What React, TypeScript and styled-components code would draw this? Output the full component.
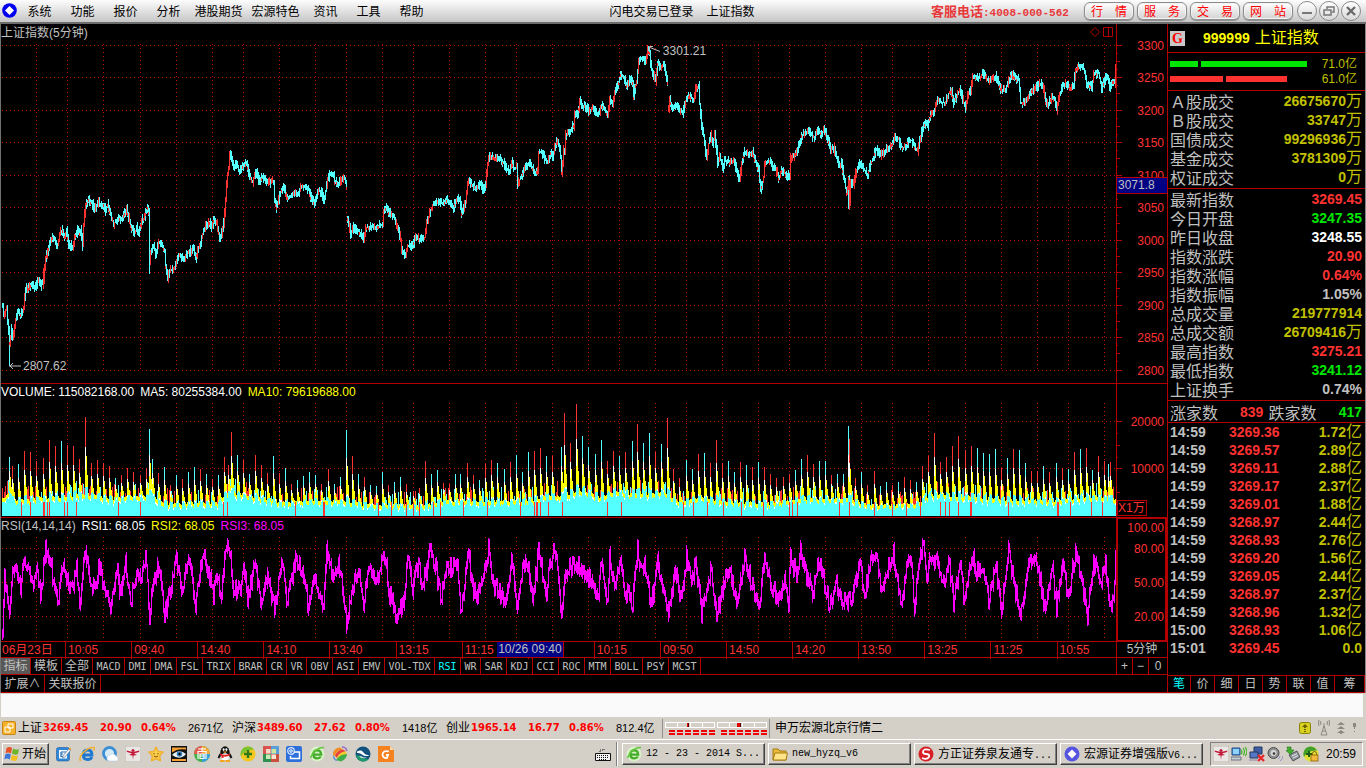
import React from "react";
import styled, { createGlobalStyle, css } from "styled-components";

const RED = "#b40000";
const CYAN = "#54ffff";
const HOT = "#ff3232";
const SILVER = "#c0c0c0";
const SANS = '"Liberation Sans", "Noto Sans CJK SC", sans-serif';
const CJK = '"Noto Sans CJK SC", "Liberation Sans", sans-serif';

const Global = createGlobalStyle`
  *, *::before, *::after { box-sizing: border-box; }
  body { margin: 0; background: #d4d0c8; font-family: ${SANS}; font-size: 12px; line-height: 16px; }
  button { font: inherit; color: inherit; margin: 0; padding: 0; border: 0; background: none; }
  svg { display: block; flex: none; }
`;

/* ---------- data ---------- */

const menus = ["系统", "功能", "报价", "分析", "港股期货", "宏源特色", "资讯", "工具", "帮助"];
const shortcuts = ["行情", "服务", "交易", "网站"];

const gridX = [36, 67, 103, 140, 176, 212, 243, 279, 315, 346, 382, 413, 449, 485, 516, 552, 588, 619, 655, 686, 722, 758, 789, 825, 861, 892, 928, 965, 1001, 1037, 1068, 1104];
const priceY = [45, 77, 110, 142, 175, 207, 240, 272, 305, 337, 370];

const price = `2,306 3,313 6,308 7,319 9,342 11,328 12,338 15,319 17,311 20,314 23,309 24,296 26,286 27,289 31,284 33,287 35,286 38,278 40,285 43,281 44,268 45,259 47,251 48,248 51,237 53,237 57,245 59,233 62,230 64,236 66,229 68,245 70,245 72,245 75,235 77,229 79,233 80,230 82,245 83,223 85,204 88,199 92,204 94,208 98,202 101,207 103,204 105,210 107,204 110,215 113,223 117,218 121,218 123,215 126,208 128,218 131,228 134,233 136,227 138,233 141,220 143,218 146,210 147,207 148,212 149,262 150,252 153,245 155,254 158,242 161,245 164,250 165,266 167,278 170,269 173,269 176,262 178,255 181,257 184,258 187,253 190,250 193,248 195,258 197,250 200,242 203,230 206,223 209,222 211,227 213,220 216,223 219,237 222,230 223,223 225,200 226,183 228,167 229,154 231,157 233,168 236,163 239,173 241,167 246,163 249,175 252,182 255,170 258,180 262,177 264,178 267,183 269,182 273,180 274,200 276,207 279,193 283,187 286,197 289,197 293,193 298,193 301,185 305,187 308,190 310,197 314,203 317,190 321,192 323,200 325,190 327,178 330,173 333,175 334,182 338,182 343,177 345,180 346,187 347,218 350,233 353,227 357,230 360,233 363,238 365,227 372,227 377,226 382,224 383,210 385,208 388,212 393,215 397,227 400,238 401,250 405,256 407,245 412,245 415,237 419,238 424,237 426,223 430,210 433,202 437,200 442,203 446,200 450,203 453,207 455,200 458,197 459,197 461,213 463,208 465,202 466,190 468,180 472,185 476,187 480,183 483,190 485,183 487,163 489,155 493,158 498,157 503,163 506,168 509,170 511,160 513,168 516,167 517,183 521,175 524,168 528,163 532,168 535,173 537,168 538,152 541,152 544,158 547,162 550,152 552,155 554,148 556,142 559,147 560,158 561,172 563,150 564,153 565,135 568,132 573,125 574,113 577,115 579,100 582,107 584,105 588,110 593,108 597,115 601,105 605,110 607,115 609,98 612,103 614,92 618,82 620,74 623,77 626,85 629,78 632,82 633,97 634,88 636,82 638,60 640,58 643,57 645,62 647,50 649,52 650,63 652,73 655,80 657,63 660,68 663,63 665,75 667,82 668,108 669,100 672,107 675,104 679,108 682,113 684,103 687,95 690,97 693,100 695,87 698,85 699,103 701,125 703,135 705,152 706,158 708,143 710,135 712,143 714,135 716,150 717,163 719,155 722,168 724,160 729,162 733,160 736,170 739,180 741,163 744,152 749,153 752,152 755,162 758,170 760,190 763,177 764,162 769,160 773,167 776,172 778,178 781,170 786,175 789,175 790,157 794,155 798,145 801,135 804,133 808,130 811,135 814,138 816,130 821,133 824,130 827,138 830,148 833,147 836,157 839,167 841,163 843,177 846,193 848,180 849,204 850,180 853,185 855,172 859,163 863,168 867,175 870,163 873,158 875,148 879,155 883,152 888,147 892,143 894,137 898,137 900,147 905,147 908,140 911,140 914,147 917,150 920,137 923,123 927,125 930,115 934,108 937,98 941,102 945,102 948,93 951,90 953,102 957,93 960,90 963,103 965,107 967,95 970,90 972,77 977,77 980,76 983,72 987,80 992,78 995,75 998,83 1001,90 1005,88 1008,80 1011,73 1015,78 1018,80 1020,102 1023,102 1027,97 1031,90 1035,87 1040,83 1043,88 1045,102 1048,103 1051,97 1054,100 1056,110 1058,97 1062,85 1065,83 1069,88 1073,85 1075,68 1081,65 1084,70 1086,87 1088,83 1091,88 1093,73 1098,73 1101,88 1104,80 1107,75 1109,90 1111,80 1114,82 1115,66`;
const sessionBreaks = new Set([347, 668]);

const rsi = `2,636 3,610 4,580 9,619 12,575 16,558 20,590 24,552 28,575 32,585 36,560 40,598 45,543 50,555 53,585 57,605 62,560 67,580 72,595 76,560 79,610 85,545 90,580 96,598 98,562 105,595 110,614 116,565 120,595 125,556 130,608 135,575 140,575 145,551 149,626 153,575 158,565 164,621 170,588 176,557 182,590 186,560 191,570 195,608 200,560 204,548 208,570 213,595 216,575 221,594 225,540 228,538 233,590 240,592 243,560 247,600 255,560 260,602 267,573 274,617 281,555 286,608 291,582 295,556 302,565 308,612 313,570 323,616 326,545 333,575 338,560 343,595 346,629 352,595 357,570 363,605 368,560 374,585 384,548 389,598 396,620 403,605 407,554 412,590 418,563 422,590 430,543 436,570 440,600 446,570 454,560 457,563 460,624 468,546 472,590 476,600 482,580 488,542 492,582 500,600 507,600 511,553 517,617 522,562 527,558 532,607 538,546 546,600 549,560 556,546 561,619 564,570 573,560 578,562 584,575 590,578 597,605 601,557 607,611 609,552 614,590 619,554 624,590 632,611 637,542 641,572 644,558 649,600 653,598 657,558 663,600 668,615 675,572 681,600 686,550 691,590 695,556 701,618 707,595 710,560 716,620 722,590 728,567 737,605 744,555 750,580 759,617 764,551 771,590 780,600 784,577 788,606 790,550 796,575 800,546 806,575 812,600 817,560 822,570 829,614 836,580 841,605 850,602 855,575 860,565 864,600 870,560 875,547 880,590 887,565 893,547 900,611 907,560 911,560 914,611 919,560 923,537 926,580 930,552 937,560 944,588 948,553 953,608 960,560 963,605 971,549 977,570 983,565 988,605 995,560 1001,614 1008,548 1013,580 1020,622 1028,558 1037,560 1044,613 1052,570 1056,615 1062,553 1068,600 1075,545 1081,580 1087,622 1093,555 1100,585 1105,558 1109,614 1114,590 1115,550`;

const spikes = `9,457c 12,466r 18,464c 24,451r 30,452r 36,461r 43,458r 49,440r 55,446r 61,441c 67,445r 73,446r 79,459r 85,417r 91,463r 97,460r 103,463r 109,466r 115,478c 121,475r 127,468r 133,472r 140,475r 146,468r 149,429c 152,459c 158,473r 164,467c 170,485r 176,475c 182,479r 188,472c 194,467c 200,469r 206,474c 212,479r 218,475c 224,457r 228,465r 231,432r 237,455c 243,460r 249,474c 255,455r 261,465r 267,473r 273,456c 279,473r 285,468c 291,484r 297,480c 303,476c 309,472c 315,475c 321,484r 328,469r 334,484c 340,477c 346,430c 352,456r 358,474c 364,477r 370,485c 376,486c 382,472c 388,485r 394,482c 400,477c 406,484r 413,491r 419,488r 425,461r 431,474c 437,470c 443,483r 449,484r 455,474c 460,474c 467,463r 473,475r 479,480c 485,464r 491,460r 497,463c 504,469c 510,462r 516,455c 522,472c 528,452c 534,451r 540,448r 546,456c 552,456r 561,447c 564,413r 570,443r 576,404r 582,436c 588,447c 595,454c 601,440c 607,461r 613,451r 619,456c 625,452r 632,441c 637,424r 643,443c 649,433c 655,452r 661,444c 667,418r 673,469r 679,478r 686,460c 692,469c 698,454r 704,453c 710,463r 716,440r 722,463r 728,461c 734,472c 740,462r 746,465c 752,467r 758,462c 764,467r 770,474r 776,478r 783,477r 789,474r 795,470c 801,459c 807,455r 813,464r 819,461c 825,461c 831,475r 837,474c 843,474c 848,426c 849,439r 855,478r 861,472c 867,485r 874,471r 880,486c 886,482c 892,485r 898,482c 904,477r 910,480r 916,482c 922,466r 928,456r 934,433r 940,462r 946,457r 952,446r 958,436r 965,450r 971,446r 977,448c 983,453c 989,454c 995,449c 1001,468r 1007,458c 1013,449r 1019,450c 1025,463c 1031,471r 1037,471r 1043,466c 1049,472r 1056,463c 1062,468r 1068,469c 1074,452r 1080,449c 1086,448r 1092,470c 1098,456r 1104,461r 1108,464c 1110,462r`;

const risers = [21, 30, 43, 44, 47, 49, 64, 67, 76, 118, 140, 223, 227, 295, 323, 324, 378, 391, 406, 413, 419, 433, 440, 463, 487, 520, 534, 536, 537, 540, 548, 562, 607, 621, 683, 693, 707, 723, 741, 763, 789, 792, 797, 839, 849, 874, 892, 906, 920, 940, 945, 949, 958, 970, 971, 1008, 1057, 1058, 1070, 1091, 1102];
const volumeBase = "2,500 9,493 14,500 40,498 50,497 85,494 110,498 150,495 165,503 218,502 226,493 250,495 280,502 345,500 360,504 425,505 440,500 520,501 545,497 560,495 585,491 600,497 615,491 630,493 650,494 665,492 680,503 700,497 720,501 770,503 800,498 850,499 870,505 915,504 930,494 990,498 1020,500 1060,500 1080,497 1115,498";

const toPoints = (s: string) => s.split(" ").map((p) => p.split(",").map(Number) as [number, number]);

function series(text: string): Map<number, number> {
  const points = toPoints(text);
  const out = new Map<number, number>();
  for (let i = 0; i < points.length - 1; i++) {
    const [x0, y0] = points[i];
    const [x1, y1] = points[i + 1];
    for (let x = x0; x <= x1; x++) out.set(x, y0 + ((y1 - y0) * (x - x0)) / (x1 - x0));
  }
  return out;
}

function generator(seed: number) {
  let s = seed;
  return () => {
    s = (s * 1103515245 + 12345) % 2147483648;
    return s / 2147483648;
  };
}

const bar = (x: number, a: number, b: number) => `M${x + 0.5} ${Math.round(a)}V${Math.round(b)}`;

function buildPrice() {
  const rnd = generator(7);
  let red = "";
  let cyan = "";
  let prev = 306;
  series(price).forEach((y, x) => {
    const from = sessionBreaks.has(x) ? y : prev;
    const top = Math.min(from, y) - rnd() * 5;
    const bottom = Math.max(from, y) + 1 + rnd() * 5;
    const d = y - from;
    const chance = d < -5 ? 0.8 : d < 0 ? 0.28 : 0.08;
    if (rnd() < chance) {
      red += bar(x, top, bottom);
    } else {
      cyan += bar(x, top, bottom);
      if (rnd() < 0.18) red += bar(x, y, y + 3);
    }
    prev = y;
  });
  cyan += bar(9, 330, 366) + bar(149, 210, 274) + bar(848, 176, 209);
  red += bar(849, 180, 210) + bar(43, 268, 289);
  return { red, cyan };
}

function buildRsi() {
  const rnd = generator(21);
  let d = "";
  let prev = 636;
  series(rsi).forEach((y, x) => {
    const pull = (582 - y) * 0.15;
    const now = y + pull + (rnd() - 0.5) * 16;
    d += bar(x, Math.min(prev, now) - 1 - rnd() * 5, Math.max(prev, now) + 1 + rnd() * 5);
    prev = now;
  });
  return d;
}

function buildVolume() {
  const rnd = generator(5);
  const base = series(volumeBase);
  const tall = new Map<number, { top: number; up: boolean }>();
  spikes.split(" ").forEach((s) => {
    const [x, rest] = s.split(",");
    tall.set(Number(x), { top: parseInt(rest, 10), up: rest.endsWith("r") });
  });
  const out = { fill: "", red: "", cyan: "", white: "", yellow: "", riser: "" };
  let last = 0;
  let lastTop = 490;
  base.forEach((b0, x) => {
    const level = b0 + rnd() * 3;
    const spike = tall.get(x);
    if (spike) {
      last = x;
      lastTop = spike.top;
      if (spike.up) out.red += bar(x, spike.top, 516);
      else out.cyan += bar(x, spike.top, 516);
    } else if (rnd() < 0.4) {
      const t = level - 5 - rnd() * 10;
      if (rnd() < 0.5) out.red += bar(x, t, level);
      else out.cyan += bar(x, t, level);
    }
    const d = x - last;
    const rise = level - lastTop;
    const yellow = [0.3, 0.48, 0.24, 0.04][d] ?? 0;
    const white = [0.6, 0.4, 0, 0][d] ?? 0;
    const yTop = level - rise * yellow;
    const low = d < 3 ? level - rise * 0.1 : level + 2;
    const cut = Math.max(yTop + 3, low);
    out.fill += bar(x, cut - 1, 516);
    if (white > 0) out.white += bar(x, level - rise * white - 1, cut);
    out.yellow += bar(x, yTop - 1, cut);
    if (rnd() < 0.3) out.white += bar(x, cut - 1, cut + 2);
  });
  risers.forEach((x) => {
    out.riser += bar(x, 502, 516);
  });
  return out;
}

const pricePaths = buildPrice();
const rsiPath = buildRsi();
const volumePaths = buildVolume();

const indicators = ["MACD", "DMI", "DMA", "FSL", "TRIX", "BRAR", "CR", "VR", "OBV", "ASI", "EMV", "VOL-TDX", "RSI", "WR", "SAR", "KDJ", "CCI", "ROC", "MTM", "BOLL", "PSY", "MCST"];
const times = ["06月23日", "10:05", "09:40", "14:40", "14:10", "13:40", "13:15", "11:15", "", "10:15", "09:50", "14:50", "14:20", "13:50", "13:25", "11:25", "10:55"];

const YEL = "#c0c000";
const LIME = "#00e600";
type Quote = [string, string, string, string?];
const turnover: Quote[] = [
  ["Ａ股成交", "26675670", YEL, "万"],
  ["Ｂ股成交", "33747", YEL, "万"],
  ["国债成交", "99296936", YEL, "万"],
  ["基金成交", "3781309", YEL, "万"],
  ["权证成交", "0", YEL, "万"],
];
const summary: Quote[] = [
  ["最新指数", "3269.45", HOT],
  ["今日开盘", "3247.35", LIME],
  ["昨日收盘", "3248.55", "#ffffff"],
  ["指数涨跌", "20.90", HOT],
  ["指数涨幅", "0.64%", HOT],
  ["指数振幅", "1.05%", SILVER],
  ["总成交量", "219777914", YEL],
  ["总成交额", "26709416", YEL, "万"],
  ["最高指数", "3275.21", HOT],
  ["最低指数", "3241.12", LIME],
  ["上证换手", "0.74%", SILVER],
];
const ticks = [
  ["14:59", "3269.36", "1.72"], ["14:59", "3269.57", "2.89"], ["14:59", "3269.11", "2.88"], ["14:59", "3269.17", "2.37"],
  ["14:59", "3269.01", "1.88"], ["14:59", "3268.97", "2.44"], ["14:59", "3268.93", "2.76"], ["14:59", "3269.20", "1.56"],
  ["14:59", "3269.05", "2.44"], ["14:59", "3268.97", "2.37"], ["14:59", "3268.96", "1.32"], ["15:00", "3268.93", "1.06"],
  ["15:01", "3269.45", "0.0"],
];
const indices = [
  ["上证", "3269.45", "20.90", "0.64%", "2671"],
  ["沪深", "3489.60", "27.62", "0.80%", "1418"],
  ["创业", "1965.14", "16.77", "0.86%", "812.4"],
];

/* ---------- title bar ---------- */

const TitleBar = styled.header`
  display: flex;
  align-items: center;
  height: 24px;
  padding-left: 2px;
  padding-right: 5px;
  background: linear-gradient(#fdfdfd, #c6c6c6);
  border-bottom: 2px solid #6c6c6c;
  color: #000;
  font-family: ${CJK};
`;
const Menu = styled.nav`
  display: flex;
  margin-left: 1px;
`;
const MenuItem = styled.button<{ $wide: boolean }>`
  width: ${(p) => (p.$wide ? 57 : 43)}px;
  height: 22px;
  text-align: center;
  white-space: nowrap;
`;
const Caption = styled.div`
  flex: 1;
  display: flex;
  justify-content: center;
  gap: 13px;
  white-space: nowrap;
`;
const Hotline = styled.div`
  width: 153px;
  color: #e8383a;
  font-size: 13px;
  font-weight: bold;
  white-space: nowrap;
`;
const HotlineNumber = styled.span`
  font: bold 11px "Liberation Mono", monospace;
`;
const ShortcutBar = styled.div`
  display: flex;
  gap: 3px;
`;
const Shortcut = styled.button`
  display: flex;
  justify-content: space-between;
  align-items: center;
  width: 50px;
  height: 18px;
  padding: 0 6px;
  border: 1px solid #8c8c8c;
  border-radius: 6px;
  background: linear-gradient(#ffffff, #d2d2d2);
  box-shadow: inset 0 0 0 1px #f4f4f4, 0 1px 1px #8a8a8a;
  color: #ff0000;
`;
const WindowButtons = styled.div`
  display: flex;
  gap: 2px;
  margin-left: 4px;
`;
const RoundButton = styled.button`
  display: grid;
  place-items: center;
  width: 20px;
  height: 20px;
  border: 1px solid #8a8a8a;
  border-radius: 10px;
  background: linear-gradient(#ffffff, #d8d8d8);
`;

/* ---------- workspace ---------- */

const Workspace = styled.main`
  display: grid;
  grid-template-columns: minmax(0, 1fr) 198px;
  background: #000;
  border-left: 1px solid #707070;
  border-right: 1px solid #8a8a8a;
`;
const ChartSide = styled.section`
  display: flex;
  flex-direction: column;
`;
const ChartRow = styled.div<{ $h: number }>`
  display: grid;
  grid-template-columns: minmax(0, 1fr) 51px;
  height: ${(p) => p.$h}px;
  border-bottom: 1px solid ${RED};
`;
const Plot = styled.div`
  position: relative;
  display: flex;
  flex-direction: column;
`;
const PlotHead = styled.div<{ $h: number }>`
  display: flex;
  gap: 6px;
  height: ${(p) => p.$h}px;
  line-height: ${(p) => p.$h - 2}px;
  color: ${SILVER};
  white-space: nowrap;
`;
const Legend = styled.span<{ $c: string }>`
  color: ${(p) => p.$c};
`;
const HeadIcons = styled.div`
  margin-left: auto;
  padding: 2px 1px 0 0;
`;
const Axis = styled.div<{ $boxed?: boolean }>`
  position: relative;
  border-left: 1px solid ${RED};
  ${(p) => p.$boxed && css`border: 2px solid ${RED}; border-bottom-width: 1px; border-top-width: 1px;`}
`;
const Callout = styled.div<{ $left: string; $top: number }>`
  position: absolute;
  left: ${(p) => p.$left};
  top: ${(p) => p.$top}px;
  display: flex;
  align-items: center;
  gap: 2px;
  color: ${SILVER};
`;
const PriceCursor = styled.div`
  position: absolute;
  left: 0;
  top: 153px;
  width: 50px;
  height: 17px;
  padding-left: 1px;
  border: solid ${RED};
  border-width: 1px 0;
  background: #000084;
  color: ${SILVER};
  line-height: 15px;
`;
const ScaleBox = styled.div`
  position: absolute;
  left: 0;
  bottom: 1px;
  width: 30px;
  height: 16px;
  border: 1px solid ${RED};
  color: ${HOT};
  line-height: 14px;
  white-space: nowrap;
`;
const TimeRow = styled.div`
  display: grid;
  grid-template-columns: minmax(0, 1fr) 51px;
  height: 16px;
  border-bottom: 1px solid ${RED};
`;
const TimeScale = styled.div`
  position: relative;
  display: flex;
`;
const TimeCell = styled.div<{ $last: boolean }>`
  flex: ${(p) => (p.$last ? 59 : 66)} 1 0;
  padding-left: 1px;
  line-height: 17px;
  color: ${HOT};
  white-space: nowrap;
  & + & {
    border-left: 1px solid ${RED};
    padding-left: 2px;
  }
`;
const TimeCursor = styled.div`
  position: absolute;
  left: 44.5%;
  top: 0;
  width: 67px;
  height: 15px;
  padding-left: 1px;
  line-height: 15px;
  background: #000084;
  border-right: 1px solid ${RED};
  color: ${SILVER};
  white-space: nowrap;
`;
const Period = styled.div`
  border-left: 1px solid ${RED};
  text-align: center;
  line-height: 15px;
  color: ${SILVER};
`;
const TabRow = styled.div`
  display: flex;
  height: 17px;
  border-bottom: 1px solid ${RED};
  line-height: 15px;
`;
const Tab = styled.button<{ $w: number; $on?: boolean; $hot?: boolean }>`
  width: ${(p) => p.$w}px;
  border-right: 1px solid ${RED};
  color: ${(p) => (p.$hot ? "#00ffff" : SILVER)};
  background: ${(p) => (p.$on ? "#585858" : "#000")};
  text-align: center;
  white-space: nowrap;
  overflow: hidden;
`;
const PlainTab = styled(Tab)`
  border-right: 0;
`;
const CodeTab = styled(Tab)`
  font-family: "DejaVu Sans Mono", monospace;
  font-size: 10px;
`;
const ZoomButtons = styled.div`
  display: grid;
  grid-template-columns: 16px 16px 1fr;
  width: 51px;
  margin-left: auto;
  border-left: 1px solid ${RED};
`;
const ExtraRow = styled(TabRow)`
  height: 18px;
  line-height: 16px;
`;

/* ---------- quote panel ---------- */

const QuotePanel = styled.aside`
  display: flex;
  flex-direction: column;
  border-left: 1px solid ${RED};
  color: ${SILVER};
`;
const Section = styled.div<{ $h: number }>`
  height: ${(p) => p.$h}px;
  border-bottom: 1px solid ${RED};
`;
const Heading = styled(Section)`
  display: flex;
  align-items: center;
  padding-left: 2px;
  color: #ffff00;
  font-size: 16px;
`;
const Badge = styled.b`
  width: 15px;
  height: 15px;
  margin-right: 18px;
  background: #c8c8c8;
  color: #ff0000;
  font: bold 14px/15px "Liberation Serif", serif;
  text-align: center;
`;
const Code = styled.b`
  margin-right: 5px;
  font-size: 14px;
`;
const FlowRow = styled.div`
  display: flex;
  align-items: center;
  gap: 3px;
  height: 15px;
  padding: 0 8px 0 2px;
  color: ${YEL};
`;
const FlowBar = styled.span<{ $w: number; $c: string }>`
  width: ${(p) => p.$w}px;
  height: 6px;
  background: ${(p) => p.$c};
`;
const FlowValue = styled.span`
  margin-left: auto;
`;
const FlowSection = styled(Section)`
  padding-top: 3px;
`;
const QuoteSection = styled(Section)`
  padding-top: 1px;
`;
const Table = styled.table`
  width: 100%;
  border-spacing: 0;
`;
const Label = styled.th`
  height: 19px;
  padding: 0 0 0 2px;
  font: normal 16px/18px ${CJK};
  text-align: left;
  vertical-align: top;
`;
const Cell = styled.td<{ $c?: string; $h?: number; $right?: boolean }>`
  height: ${(p) => p.$h ?? 19}px;
  padding: 0 3px 0 2px;
  color: ${(p) => p.$c ?? SILVER};
  font: bold 14px/${(p) => p.$h ?? 19}px ${SANS};
  text-align: ${(p) => (p.$right ? "right" : "left")};
  vertical-align: top;
`;
const TimeColumn = styled.col`
  width: 59px;
`;
const Unit = styled.span`
  font: normal 16px/0 ${CJK};
`;
const Breadth = styled(Section)`
  display: flex;
  align-items: center;
  padding: 0 3px 0 2px;
  font: 16px/20px ${CJK};
`;
const Count = styled.b<{ $c: string; $gap: number }>`
  margin-left: ${(p) => (p.$gap ? "22px" : "auto")};
  margin-right: ${(p) => p.$gap}px;
  color: ${(p) => p.$c};
  font: bold 14px/20px ${SANS};
`;
const PanelTabs = styled.div`
  display: flex;
  height: 18px;
  margin-top: auto;
  border-top: 1px solid ${RED};
  border-bottom: 1px solid ${RED};
  line-height: 16px;
`;

/* ---------- bottom bars ---------- */

const MessageBar = styled.div`
  height: 24px;
  border: solid #d4d0c8;
  border-width: 1px 3px 0 1px;
  background: #fafafa;
`;
const StatusBar = styled.footer`
  display: flex;
  align-items: center;
  height: 22px;
  padding: 0 8px 0 2px;
  background: #d4d0c8;
  color: #000;
  white-space: nowrap;
`;
const IndexGroup = styled.div`
  display: grid;
  grid-template-columns: 25px 57px 41px 47px 44px;
  align-items: center;
  width: 214px;
`;
const Figure = styled.b`
  color: #ff0000;
  font: bold 10px/16px "DejaVu Sans", sans-serif;
`;
const Amount = styled.span`
  font-size: 11px;
`;
const Divider = styled.span`
  width: 1px;
  height: 19px;
  background: #909090;
`;
const Spacer = styled.span<{ $w: number }>`
  width: ${(p) => p.$w}px;
`;
const Gauges = styled.div`
  display: flex;
  gap: 2px;
  margin: 0 2px;
`;
const StatusIcons = styled.div`
  display: flex;
  align-items: center;
  gap: 7px;
  margin-left: auto;
`;
const TaskBar = styled.footer`
  display: flex;
  align-items: center;
  height: 29px;
  padding: 0 3px 0 2px;
  background: #d4d0c8;
  border-top: 1px solid #fff;
  color: #000;
`;
const raised = css`
  border: 1px solid;
  border-color: #fff #404040 #404040 #fff;
  box-shadow: inset -1px -1px #808080;
`;
const StartButton = styled.button`
  display: flex;
  align-items: center;
  gap: 2px;
  width: 47px;
  height: 22px;
  padding-left: 1px;
  white-space: nowrap;
  ${raised}
`;
const QuickLaunch = styled.div`
  display: flex;
  gap: 7px;
  margin-left: 7px;
`;
const Tool = styled.button`
  width: 16px;
  height: 16px;
`;
const LangButton = styled(Tool)`
  margin-left: auto;
  margin-right: 5px;
`;
const Groove = styled.span`
  width: 2px;
  height: 24px;
  margin-right: 4px;
  background: #fff;
  border-left: 1px solid #808080;
`;
const TaskButton = styled.button`
  display: flex;
  align-items: center;
  gap: 4px;
  width: 143px;
  height: 22px;
  margin-right: 3px;
  padding-left: 3px;
  font-family: ${CJK};
  white-space: nowrap;
  ${raised}
`;
const Mono = styled.span`
  font-family: "Liberation Mono", monospace;
  font-size: 10px;
`;
const Tray = styled.div`
  display: flex;
  align-items: center;
  gap: 2px;
  width: 153px;
  height: 24px;
  margin-left: 4px;
  padding-left: 2px;
  border: 1px solid;
  border-color: #808080 #fff #fff #808080;
`;
const Clock = styled.span`
  margin-left: 5px;
`;

/* ---------- drawings ---------- */

const Grid = ({ x0, y0, y1, rows }: { x0: number; y0: number; y1: number; rows: number[] }) => (
  <path
    stroke="#c00000"
    strokeDasharray="1 3"
    d={gridX.map((x) => `M${x + 0.5} ${y0}V${y1}`).join("") + rows.map((y) => `M${x0} ${y + 0.5}H1116`).join("")}
  />
);

const Canvas = ({ top, height, children }: { top: number; height: number; children: React.ReactNode }) => (
  <svg width="100%" height={height} viewBox={`1 ${top} 1115 ${height}`} preserveAspectRatio="none" shapeRendering="crispEdges" fill="none">
    {children}
  </svg>
);

const AxisDrawing = ({ top, height, labels, left = 1117, minor }: { top: number; height: number; labels: [number, string][]; left?: number; minor?: string }) => (
  <svg width={1167 - left} height={height} viewBox={`${left} ${top} ${1167 - left} ${height}`}>
    {minor && <path d={minor} stroke={RED} shapeRendering="crispEdges" />}
    {labels.map(([y, t]) => (
      <text key={t} x="1164" y={y + 5} textAnchor="end" fill={HOT} fontSize="12" fontFamily="Liberation Sans, sans-serif">{t}</text>
    ))}
  </svg>
);

const priceTicks =
  priceY.map((y) => `M1117 ${y + 0.5}h5`).join("") +
  priceY.slice(0, -1).map((y) => `M1117 ${y + 16.5}h3M1117 ${y + 8.5}h1M1117 ${y + 24.5}h1`).join("");

const Box16 = ({ children }: { children: React.ReactNode }) => (
  <svg width="16" height="16" viewBox="0 0 16 16">{children}</svg>
);

const Dragonfly = () => (
  <Box16>
    <rect width="16" height="16" rx="1" fill="#e9e7e4" stroke="#b8b4ac" />
    <path d="M1.500 4.500L8 6l6.500-1.500L14 6 9 7.500l3 1.500-3.500.5L8 14l-.5-4.500L4 9l3-1.500L2 6z" fill="#c4173a" />
    <circle cx="8" cy="4.500" r="1.500" fill="#c4173a" />
  </Box16>
);
const GreenE = () => (
  <Box16>
    <circle cx="8" cy="8" r="7.400" fill="#d9f2c8" />
    <path d="M4.600 8.600h7.600C12 5.800 10.300 4.400 8.300 4.400 6 4.400 4.400 6 4.400 8.400S6 12.300 8.300 12.300c1.600 0 2.800-.6 3.500-1.800" fill="none" stroke="#45ad2b" strokeWidth="2.300" />
    <path d="M1.500 12C3 6 9 1 15 1.500" stroke="#63c63d" strokeWidth="1.500" fill="none" />
  </Box16>
);
const SourceLogo = ({ color = "#5454e0" }: { color?: string }) => (
  <Box16>
    <circle cx="8" cy="8" r="7.500" fill={color} />
    <path d="M8 3.500L12.500 8 8 12.500 3.500 8z" fill="#fff" />
  </Box16>
);

const quickIcons: [string, React.ReactNode][] = [
  ["显示桌面", <Box16><rect x=".5" y="1.500" width="13" height="13.500" rx="2" fill="#2f86d6" stroke="#1c5c9e" strokeWidth=".6" /><path d="M3 4h8v8.500H3z" fill="#f2f8fd" /><path d="M5 6h5M5 8h2M5 10.500h4M5 6v5" stroke="#2b6cab" strokeWidth="1.200" fill="none" /><path d="M7 10l5.500-7 2 1.500L9 11l-2.500 1z" fill="#f4f4f4" stroke="#4a6f95" strokeWidth=".6" /><path d="M12.500 3l1-1.500 2 1.500-1 1.500z" fill="#e8a040" /></Box16>],
  ["浏览器", <Box16><path d="M4.500 9h8.500C13 5.500 11 4 8.700 4 6 4 4.300 6 4.300 9s2 4.500 4.500 4.500c2 0 3.500-1 4-2.500" fill="none" stroke="#1f78d1" strokeWidth="2.800" /><path d="M1.500 15C-1 11 7 1 15 1.500q1 1-.5 3" stroke="#f0b030" strokeWidth="1.500" fill="none" /></Box16>],
  ["云浏览器", <Box16><circle cx="7.500" cy="7.500" r="6" fill="#d6ebf8" stroke="#3c8fd4" strokeWidth="2.800" /><path d="M7 15a2.800 2.800 0 0 1 .4-5.500 4 4 0 0 1 6.600.5 2.700 2.700 0 0 1 .5 5z" fill="#fff" stroke="#b9cfe0" strokeWidth=".6" /></Box16>],
  ["行情", <Dragonfly />],
  ["收藏", <Box16><path d="M8 1.200l2.100 4.300 5 .6-3.500 3.600.8 5L8 12.600l-4.400 2.100.8-5L.9 6.100l5-.6z" fill="#fbcf4e" stroke="#f0b030" strokeWidth="1.500" strokeLinejoin="round" /><path d="M6 7v1.500M10 7v1.500M6 10.200q2 1.600 4 0" stroke="#8a5200" fill="none" /></Box16>],
  ["看图", <Box16><rect width="16" height="16" fill="#111" /><path d="M1 1.500h14v2Q7 2 1 6.500zM1 13h14v2H1z" fill="#f5a032" /><path d="M1 9q7-7 14-1-6 7-14 1z" fill="#e7f2fb" /><circle cx="8.500" cy="8" r="2.800" fill="#3f83b8" /><circle cx="8.500" cy="8" r="1.200" fill="#000" /></Box16>],
  ["证券", <Box16><circle cx="8" cy="8" r="8" fill="#44b049" /><path d="M8 8V0a8 8 0 0 1 8 8z" fill="#f3a93c" /><path d="M8 8h8a8 8 0 0 1-8 8z" fill="#35a0d9" /><path d="M8 8H0a8 8 0 0 1 8-8z" fill="#e85a4f" /><path d="M4 13V5.500h8V13M4 3h8M8 1.500v4M6 8h4v4.500H6zM6 10h4" stroke="#fff" strokeWidth="1.200" fill="none" /></Box16>],
  ["即时通讯", <Box16><ellipse cx="8" cy="7.500" rx="4.700" ry="7.300" fill="#111" /><path d="M3.500 8L1.500 12M12.500 8l2 4" stroke="#111" strokeWidth="2" /><ellipse cx="8" cy="11" rx="4" ry="3.800" fill="#fff" /><ellipse cx="6.600" cy="3.600" rx="1" ry="1.400" fill="#fff" /><ellipse cx="9.400" cy="3.600" rx="1" ry="1.400" fill="#fff" /><path d="M3.200 7.500q5 2.500 9.600 0v2q-4.600 2.300-9.600 0zM4.500 9.500h2V12h-2z" fill="#e42222" /><path d="M5.500 5.500h5L8 7zM3 14h4.500v2H3zM8.500 14H13v2H8.500z" fill="#f5a51d" /></Box16>],
  ["安全卫士", <Box16><circle cx="8" cy="8" r="7.500" fill="#f4c81e" /><path d="M8 .5A7.500 7.500 0 0 0 1 10.600Q4 4 14 3.600A7.500 7.500 0 0 0 8 .5z" fill="#7cc42e" /><path d="M8 4v8M4 8h8" stroke="#2f7a18" strokeWidth="2.400" /></Box16>],
  ["软件管家", <Box16><rect width="16" height="16" rx="2" fill="#3b8fd6" /><path d="M0 0h8v8H0z" fill="#d9534f" /><path d="M8 0h8v8H8z" fill="#5a9fd8" /><path d="M0 8h8v8H0z" fill="#2f8f4e" /><path d="M8 8h8v8H8z" fill="#c8503c" /><path d="M3 3h4.500v4.500H3z" fill="#f8d8c8" /><path d="M8.500 3H13v4.500H8.500z" fill="#cfe6a0" /><path d="M3 8.500h4.500V13H3z" fill="#c9ebb8" /><path d="M8.500 8.500H13V13H8.500z" fill="#fbe3d4" /></Box16>],
  ["办公", <Box16><rect width="16" height="16" rx="2" fill="#2d6fdb" /><path d="M8 6h5.500v6.500h-9V10" stroke="#fff" strokeWidth="1.500" fill="none" /><circle cx="5" cy="5" r="3.300" fill="none" stroke="#dbeaff" strokeWidth="1.200" /><circle cx="5" cy="5" r="1.300" fill="none" stroke="#fff" /></Box16>],
  ["网页", <GreenE />],
  ["多媒体", <Box16><path d="M1 9Q1 2 8 1.500l3 2Q4 4 3 10z" fill="#f28a1c" /><path d="M3 10Q5 4 11 3.500l3 2Q7 6 5 12z" fill="#e8413a" /><path d="M5 12Q7 6 14 5.500l1 3Q9 9 7 14z" fill="#f3c92e" /><path d="M4 14Q8 8 15 8q0 5-6 7.500z" fill="#3fae49" /><path d="M1 9l3 5 2 1Q1 15 1 9z" fill="#3a7fd5" /><path d="M10 1q4 0 5 4" stroke="#9a6bc8" strokeWidth="1.500" fill="none" /></Box16>],
  ["海证", <Box16><circle cx="8" cy="8" r="7.500" fill="#14527e" /><path d="M1 9a7.500 7.500 0 0 0 13 4Q8 13 6 10z" fill="#1f9a6c" /><path d="M2 5.500q4-2 6 .5 2 3 6.500 3.500-5 1.500-7.500-1Q5 6.500 2 7zM4 10q3 0 4 1.500h4q-5 2-8-1.500z" fill="#fff" /></Box16>],
  ["阅读器", <Box16><path d="M0 0h12l4 4v12H0z" fill="#f58220" /><path d="M12 0v4h4z" fill="#ffd9b0" /><path d="M11 5.500Q5 4 4.500 8.500 5 12.500 9 12l1-3H8" stroke="#fff" strokeWidth="1.800" fill="none" /></Box16>],
];

const trayIcons: [string, React.ReactNode][] = [
  ["行情提醒", <Dragonfly />],
  ["无线网络", <Box16><path d="M1 2h8v7H1z" fill="#4d8fe0" stroke="#274d84" /><path d="M2 3h6v5H2z" fill="#8ed3f7" /><path d="M0 11h10v3H0z" fill="#c9ced6" stroke="#6c7480" /><path d="M10 4q2 2 0 4M12 2q3 4 0 7M14 1q4 5 0 9" stroke="#48b428" strokeWidth="1.200" fill="none" /></Box16>],
  ["本地连接", <Box16><path d="M5 1h8v7H5z" fill="#3e5fa8" stroke="#22355e" /><path d="M1 6h8v6H1z" fill="#5377c4" stroke="#22355e" /><path d="M0 13h8v2H0z" fill="#aab" /><path d="M9 9l6 6M15 9l-6 6" stroke="#e8262a" strokeWidth="2.400" /></Box16>],
  ["音量", <Box16><circle cx="6.500" cy="7" r="5.500" fill="#8f8f8f" stroke="#4d4d4d" /><circle cx="6.500" cy="7" r="3" fill="#d8d8d8" /><circle cx="7" cy="7.500" r="1.300" fill="#333" /><path d="M11 13q2-1 2-3M13 15q3-2 3-5" stroke="#8f93c8" fill="none" /></Box16>],
  ["安全移除硬件", <Box16><path d="M4 9l8-4 3 6-7 4z" fill="#8f959c" stroke="#50555c" /><path d="M7 10l5-2.500M8 12l5-2.500" stroke="#e6e6e6" /><path d="M2 1h4v3h3L5.500 8.500 1 4.500h2z" fill="#3fb12c" stroke="#1c7011" strokeWidth=".6" /></Box16>],
  ["安全中心", <Box16><circle cx="8" cy="8" r="7.500" fill="#dfe234" /><path d="M8 .5A7.500 7.500 0 0 0 1 11Q4 4 14 4.500A7.500 7.500 0 0 0 8 .5z" fill="#41a12b" /><path d="M6 5v6M3 8h6" stroke="#1e5d14" strokeWidth="2" /><rect x="8" y="9" width="7" height="6" fill="#f2b93b" stroke="#8a5f0f" strokeWidth=".8" /><path d="M9.500 9V7.500a2 2 0 0 1 4 0V9" stroke="#8a5f0f" fill="none" /></Box16>],
];

const Gauge = ({ mark, width }: { mark: number; width: number }) => (
  <svg width="50" height="16" viewBox="0 0 50 16" shapeRendering="crispEdges" fill="none">
    <path d="M.5 2.500h49v5H.5zM12.500 2v6M25.500 2v6M37.500 2v6" stroke="#fff" />
    <path d={`M${mark} 3h${width}v4h-${width}z`} fill="#e00000" />
    <path d={`M${mark + width} 3h1v4h-1z`} fill="#600000" />
    <path d="M4 11h46M4 14h46" stroke="#f00000" strokeWidth="2" strokeDasharray="6 2" />
  </svg>
);

const QuoteTable = ({ rows }: { rows: Quote[] }) => (
  <Table>
    <tbody>
      {rows.map(([label, value, color, unit]) => (
        <tr key={label}>
          <Label scope="row">{label}</Label>
          <Cell $c={color} $right>{value}{unit && <Unit>{unit}</Unit>}</Cell>
        </tr>
      ))}
    </tbody>
  </Table>
);

/* ---------- page ---------- */

export default function App() {
  return (
    <>
      <Global />
      <TitleBar>
        <svg width="15" height="16" viewBox="0 0 15 16"><circle cx="7.500" cy="7.500" r="7.300" fill="#0000f0" /><path d="M7.500 3L12 7.500 7.500 12 3 7.500z" fill="#fff" /></svg>
        <Menu>
          {menus.map((m) => <MenuItem key={m} $wide={m.length > 2}>{m}</MenuItem>)}
        </Menu>
        <Caption><span>闪电交易已登录</span><span>上证指数</span></Caption>
        <Hotline>客服电话<HotlineNumber>:4008-000-562</HotlineNumber></Hotline>
        <ShortcutBar>
          {shortcuts.map((s) => <Shortcut key={s} aria-label={s}><span>{s[0]}</span><span>{s[1]}</span></Shortcut>)}
        </ShortcutBar>
        <WindowButtons>
          <RoundButton aria-label="最小化"><svg width="12" height="12" viewBox="0 0 12 12"><path d="M1 8h10" stroke="#777" strokeWidth="2" /></svg></RoundButton>
          <RoundButton aria-label="还原"><svg width="12" height="12" viewBox="0 0 12 12" fill="none" stroke="#777" strokeWidth="1.500"><path d="M4 4V2h7v5H9" /><path d="M1 5h7v5H1z" /></svg></RoundButton>
          <RoundButton aria-label="关闭"><svg width="12" height="12" viewBox="0 0 12 12"><path d="M2 2l8 8M10 2l-8 8" stroke="#6a6a6a" strokeWidth="2.400" /></svg></RoundButton>
        </WindowButtons>
      </TitleBar>

      <Workspace>
        <ChartSide>
          <ChartRow $h={360}>
            <Plot>
              <PlotHead $h={20}>
                <span>上证指数(5分钟)</span>
                <HeadIcons>
                  <svg width="25" height="12" viewBox="0 0 25 12" fill="none" stroke={RED}><path d="M5 1.500L9.500 6 5 10.500.5 6z" /><path d="M13.500 1.500h9v9h-9zM18.500 1.500v9" /></svg>
                </HeadIcons>
              </PlotHead>
              <Canvas top={44} height={339}>
                <Grid x0={2} y0={44} y1={371} rows={priceY} />
                <path d={pricePaths.cyan} stroke={CYAN} />
                <path d={pricePaths.red} stroke={HOT} />
              </Canvas>
              <Callout $left="58.1%" $top={19}>
                <svg width="12" height="10" viewBox="0 0 12 10" fill="none" stroke={SILVER}><path d="M4 .5H.5v4M1 1.500l10 4" /></svg>
                3301.21
              </Callout>
              <Callout $left="8px" $top={334}>
                <svg width="12" height="8" viewBox="0 0 12 8" fill="none" stroke={SILVER}><path d="M0 4h12M4 1L1 4l3 3" /></svg>
                2807.62
              </Callout>
            </Plot>
            <Axis>
              <AxisDrawing top={24} height={359} minor={priceTicks} labels={priceY.map((y, i) => [y, String(3300 - i * 50)])} />
              <PriceCursor>3071.8</PriceCursor>
            </Axis>
          </ChartRow>

          <ChartRow $h={134}>
            <Plot>
              <PlotHead $h={19}>
                <Legend $c="#fff">VOLUME: 115082168.00</Legend>
                <Legend $c="#fff">MA5: 80255384.00</Legend>
                <Legend $c="#ffff00">MA10: 79619688.00</Legend>
              </PlotHead>
              <Canvas top={403} height={114}>
                <Grid x0={2} y0={403} y1={516} rows={[421, 468]} />
                <path d={volumePaths.red} stroke={HOT} />
                <path d={volumePaths.cyan} stroke={CYAN} />
                <path d={volumePaths.fill} stroke={CYAN} />
                <path d={volumePaths.white} stroke="#fff" />
                <path d={volumePaths.yellow} stroke="#ffff00" />
                <path d={volumePaths.riser} stroke={HOT} />
              </Canvas>
            </Plot>
            <Axis>
              <AxisDrawing top={384} height={133} minor="M1117 421.500h5M1117 468.500h5M1117 445.500h3M1117 433.500h1M1117 457.500h1M1117 492.500h3" labels={[[421, "20000"], [468, "10000"]]} />
              <ScaleBox>X1万</ScaleBox>
            </Axis>
          </ChartRow>

          <ChartRow $h={124}>
            <Plot>
              <PlotHead $h={19}>
                <span>RSI(14,14,14)</span>
                <Legend $c="#fff">RSI1: 68.05</Legend>
                <Legend $c="#ffff00">RSI2: 68.05</Legend>
                <Legend $c="#ff00ff">RSI3: 68.05</Legend>
              </PlotHead>
              <Canvas top={537} height={104}>
                <Grid x0={2} y0={537} y1={638} rows={[548, 582, 616]} />
                <path d={rsiPath} stroke="#ff00ff" />
              </Canvas>
            </Plot>
            <Axis $boxed>
              <AxisDrawing top={519} height={121} left={1118} labels={[[527, "100.00"], [548, "80.00"], [582, "50.00"], [616, "20.00"]]} />
            </Axis>
          </ChartRow>

          <TimeRow>
            <TimeScale>
              {times.map((t, i) => <TimeCell key={i} $last={i === times.length - 1}>{t}</TimeCell>)}
              <TimeCursor>10/26 09:40</TimeCursor>
            </TimeScale>
            <Period>5分钟</Period>
          </TimeRow>

          <TabRow>
            <Tab $w={30} $on>指标</Tab>
            <Tab $w={31}>模板</Tab>
            <Tab $w={31}>全部</Tab>
            {indicators.map((t) => <CodeTab key={t} $w={t.length * 6 + 8} $hot={t === "RSI"}>{t}</CodeTab>)}
            <ZoomButtons>
              <Tab $w={16}>+</Tab>
              <Tab $w={16}>−</Tab>
              <PlainTab $w={18}>0</PlainTab>
            </ZoomButtons>
          </TabRow>
          <ExtraRow>
            <Tab $w={44}>扩展∧</Tab>
            <Tab $w={56}>关联报价</Tab>
          </ExtraRow>
        </ChartSide>

        <QuotePanel>
          <Heading $h={29}><Badge>G</Badge><Code>999999</Code>上证指数</Heading>
          <FlowSection $h={38}>
            <FlowRow><FlowBar $w={28} $c={LIME} /><FlowBar $w={106} $c={LIME} /><FlowValue>71.0亿</FlowValue></FlowRow>
            <FlowRow><FlowBar $w={53} $c={HOT} /><FlowBar $w={61} $c={HOT} /><FlowValue>61.0亿</FlowValue></FlowRow>
          </FlowSection>
          <QuoteSection $h={98}><QuoteTable rows={turnover} /></QuoteSection>
          <QuoteSection $h={212}><QuoteTable rows={summary} /></QuoteSection>
          <Breadth $h={22}>
            涨家数<Count $c={HOT} $gap={5}>839</Count>跌家数<Count $c={LIME} $gap={0}>417</Count>
          </Breadth>
          <Table>
            <colgroup><TimeColumn /><col /><col /></colgroup>
            <tbody>
              {ticks.map(([time, p, amount], i) => (
                <tr key={i}>
                  <Cell $h={18}>{time}</Cell>
                  <Cell $h={18} $c={HOT}>{p}</Cell>
                  <Cell $h={18} $c={YEL} $right>{amount}{amount !== "0.0" && <Unit>亿</Unit>}</Cell>
                </tr>
              ))}
            </tbody>
          </Table>
          <PanelTabs>
            {["笔", "价", "细", "日", "势", "联", "值"].map((t, i) => <Tab key={t} $w={i ? 24 : 23} $hot={i === 0}>{t}</Tab>)}
            <Tab $w={30}>筹</Tab>
          </PanelTabs>
        </QuotePanel>
      </Workspace>

      <MessageBar />
      <StatusBar>
        <svg width="16" height="14" viewBox="0 0 16 14"><rect x=".5" y=".5" width="13" height="13" rx="1" fill="#f5b32c" stroke="#c98312" /><path d="M6 3h5v4H6zM3 6h5v5H3z" fill="#f5b32c" stroke="#fff" /></svg>
        {indices.map(([name, value, change, pct, amount]) => (
          <IndexGroup key={name}>
            <span>{name}</span><Figure>{value}</Figure><Figure>{change}</Figure><Figure>{pct}</Figure><Amount>{amount}亿</Amount>
          </IndexGroup>
        ))}
        <Spacer $w={2} />
        <Divider />
        <Gauges><Gauge mark={22} width={1} /><Gauge mark={20} width={3} /></Gauges>
        <Divider />
        <Spacer $w={5} />
        <span>申万宏源北京行情二</span>
        <StatusIcons>
          <svg width="12" height="12" viewBox="0 0 12 12"><rect x=".5" y=".5" width="11" height="11" rx="2" fill="#d8d020" stroke="#8a8400" /><path d="M6 2l3 3H7v1H5V5H3zM5 7h2v1H5zM5 9h2v1H5z" fill="#6a6200" /></svg>
          <svg width="12" height="16" viewBox="0 0 12 16" fill="none" stroke="#8a8a80"><path d="M6 3v5M3 15l3-9 3 9zM4 11h4M3 1q-1 2 0 4M9 1q1 2 0 4M1 0q-1 3 0 6M11 0q1 3 0 6" /></svg>
          <svg width="8" height="12" viewBox="0 0 8 12" fill="#8a8a80"><path d="M4 0l4 3H0zM4 4l4 3H0zM4 8l4 3H5v1H3v-1H0z" /></svg>
          <svg width="6" height="12" viewBox="0 0 6 12" fill="#8a8a80"><path d="M1 1h3v4H3v2H2V5H1zM2 9h1v1H2z" /></svg>
        </StatusIcons>
      </StatusBar>

      <TaskBar>
        <StartButton>
          <svg width="16" height="16" viewBox="0 0 16 16"><path d="M2.500 2q3-2 5.500 0L7 7.500q-3-2-5.500 0z" fill="#e8512a" /><path d="M9 2.500q3 2 6 .5l-1 5q-3 1.500-6-.5z" fill="#6fb52c" /><path d="M1.300 8.500q3-2 5.500 0l-1 5q-3-2-5.500 0z" fill="#3c78d8" /><path d="M7.800 8.800q3 2 6 .5l-1 5q-3 1.500-6-.5z" fill="#f4c020" /></svg>
          开始
        </StartButton>
        <QuickLaunch>
          {quickIcons.map(([name, icon]) => <Tool key={name} aria-label={name}>{icon}</Tool>)}
        </QuickLaunch>
        <LangButton aria-label="输入法">
          <svg width="16" height="16" viewBox="0 0 16 16"><path d="M5 6V4h4V2" stroke="#222" strokeDasharray="1 1" fill="none" /><path d="M.5 7.500h15v7H.5z" fill="#f4f4f4" stroke="#111" /><path d="M2 9.500h12M2 11.500h12M4 13.500h8" stroke="#111" strokeDasharray="1 1" /></svg>
        </LangButton>
        <Groove />
        <TaskButton><GreenE /><Mono>12 - 23 - 2014 S...</Mono></TaskButton>
        <TaskButton>
          <Box16><path d="M1 3h5l2 2h6v9H1z" fill="#e8b93a" stroke="#a67a12" /><path d="M1 14l2-7h12.500L14 14z" fill="#ffe488" stroke="#a67a12" /></Box16>
          <Mono>new_hyzq_v6</Mono>
        </TaskButton>
        <TaskButton>
          <Box16><circle cx="8" cy="8" r="7.500" fill="#d91f26" /><path d="M12 4Q5 2 5 6q0 2 3 2 4 0 3 3-2 3-7 1" stroke="#fff" strokeWidth="1.800" fill="none" /></Box16>
          <span>方正证券泉友通专<Mono>...</Mono></span>
        </TaskButton>
        <TaskButton><SourceLogo /><span>宏源证券增强版<Mono>V6...</Mono></span></TaskButton>
        <Tray>
          {trayIcons.map(([name, icon]) => <Tool key={name} aria-label={name}>{icon}</Tool>)}
          <Clock>20:59</Clock>
        </Tray>
      </TaskBar>
    </>
  );
}
